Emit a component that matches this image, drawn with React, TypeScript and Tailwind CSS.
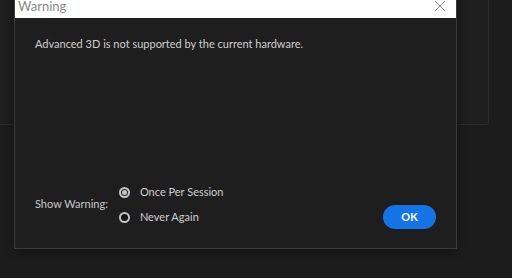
import { useState } from "react";

const options = ["Once Per Session", "Never Again"];

const Radio = ({ checked }: { checked: boolean }) =>
  checked ? (
    <span className="w-[11px] h-[11px] rounded-full bg-[#c4c4c4] flex items-center justify-center">
      <span className="w-[5px] h-[5px] rounded-full bg-[#c4c4c4] ring-1 ring-[#2a2a2a]" />
    </span>
  ) : (
    <span className="w-[11px] h-[11px] rounded-full border-2 border-[#c4c4c4] bg-[#151515]" />
  );

export default function App() {
  const [choice, setChoice] = useState(0);

  return (
    <div className="relative w-[512px] h-[278px] overflow-hidden bg-[#1c1c1c] font-['Lato',sans-serif]">
      {/* panel behind the dialog */}
      <div className="w-[489px] h-[125px] border-r border-b border-[#2c2c2c] rounded-br-[3px] bg-[#1e1e1e]" />

      {/* modal */}
      <div className="absolute left-[14px] top-[-8px] w-[443px] h-[257px] flex flex-col border border-[#3c3c3c] bg-[#1e1e1e] shadow-[0_2px_8px_rgba(0,0,0,0.4)]">
        <div className="h-[25px] shrink-0 bg-white flex items-center justify-between pl-[3px] pr-[10px]">
          <span className="text-[13px] leading-[25px] pt-[2px] text-[#8a8a8a]">Warning</span>
          <svg width="12" height="12" viewBox="0 0 12 12" className="mt-[1px]">
            <path d="M1 1L11 11M11 1L1 11" stroke="#8a8a8a" strokeWidth="1" />
          </svg>
        </div>

        <div className="flex-1 flex flex-col justify-between pl-[20px] pr-[20px] pt-[19px] pb-[19px]">
          <p className="text-[11px] leading-[14px] text-[#cfcfcf]">
            Advanced 3D is not supported by the current hardware.
          </p>

          <div className="flex items-end justify-between">
            <div className="flex items-center gap-[11px] mb-[5px]">
              <span className="text-[11px] text-[#c8c8c8]">Show Warning:</span>
              <div className="flex flex-col gap-[11px]">
                {options.map((o, i) => (
                  <button
                    key={o}
                    onClick={() => setChoice(i)}
                    className="flex items-center gap-[10px] text-[11px] leading-[14px] text-[#cfcfcf]"
                  >
                    <Radio checked={choice === i} />
                    {o}
                  </button>
                ))}
              </div>
            </div>
            <button className="w-[53px] h-[24px] rounded-full bg-[#1473e6] text-white text-[11px] font-bold">
              OK
            </button>
          </div>
        </div>
      </div>
    </div>
  );
}
